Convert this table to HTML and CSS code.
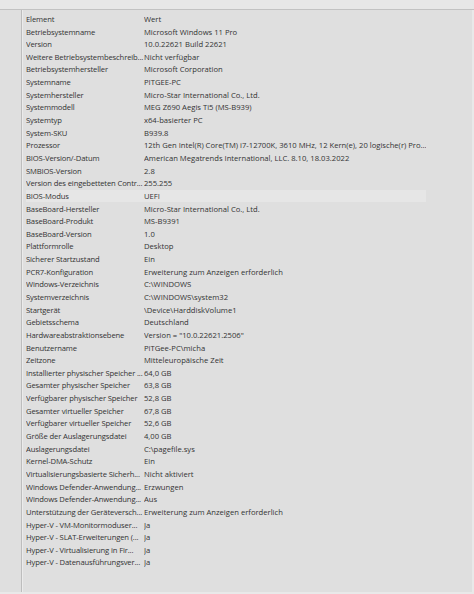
FILE: index.html
```html
<!DOCTYPE html>
<html lang="de">
<head>
<meta charset="utf-8">
<title>Systemübersicht</title>
<link rel="stylesheet" href="styles.css">
</head>
<body>
<div class="window">
  <div class="topbar"></div>
  <div class="main">
    <div class="tree"></div>
    <div class="listwrap">
      <div class="list">
        <div class="row head"><span class="c1">Element</span><span class="c2">Wert</span></div>
        <div class="row"><span class="c1">Betriebsystemname</span><span class="c2">Microsoft Windows 11 Pro</span></div>
        <div class="row"><span class="c1">Version</span><span class="c2">10.0.22621 Build 22621</span></div>
        <div class="row"><span class="c1">Weitere Betriebsystembeschreib...</span><span class="c2">Nicht verfügbar</span></div>
        <div class="row"><span class="c1">Betriebsystemhersteller</span><span class="c2">Microsoft Corporation</span></div>
        <div class="row"><span class="c1">Systemname</span><span class="c2">PITGEE-PC</span></div>
        <div class="row"><span class="c1">Systemhersteller</span><span class="c2">Micro-Star International Co., Ltd.</span></div>
        <div class="row"><span class="c1">Systemmodell</span><span class="c2">MEG Z690 Aegis Ti5 (MS-B939)</span></div>
        <div class="row"><span class="c1">Systemtyp</span><span class="c2">x64-basierter PC</span></div>
        <div class="row"><span class="c1">System-SKU</span><span class="c2">B939.8</span></div>
        <div class="row"><span class="c1">Prozessor</span><span class="c2">12th Gen Intel(R) Core(TM) i7-12700K, 3610 MHz, 12 Kern(e), 20 logische(r) Pro...</span></div>
        <div class="row"><span class="c1">BIOS-Version/-Datum</span><span class="c2">American Megatrends International, LLC. 8.10, 18.03.2022</span></div>
        <div class="row"><span class="c1">SMBIOS-Version</span><span class="c2">2.8</span></div>
        <div class="row"><span class="c1">Version des eingebetteten Contr...</span><span class="c2">255.255</span></div>
        <div class="row selected"><span class="c1">BIOS-Modus</span><span class="c2">UEFI</span></div>
        <div class="row"><span class="c1">BaseBoard-Hersteller</span><span class="c2">Micro-Star International Co., Ltd.</span></div>
        <div class="row"><span class="c1">BaseBoard-Produkt</span><span class="c2">MS-B9391</span></div>
        <div class="row"><span class="c1">BaseBoard-Version</span><span class="c2">1.0</span></div>
        <div class="row"><span class="c1">Plattformrolle</span><span class="c2">Desktop</span></div>
        <div class="row"><span class="c1">Sicherer Startzustand</span><span class="c2">Ein</span></div>
        <div class="row"><span class="c1">PCR7-Konfiguration</span><span class="c2">Erweiterung zum Anzeigen erforderlich</span></div>
        <div class="row"><span class="c1">Windows-Verzeichnis</span><span class="c2">C:\WINDOWS</span></div>
        <div class="row"><span class="c1">Systemverzeichnis</span><span class="c2">C:\WINDOWS\system32</span></div>
        <div class="row"><span class="c1">Startgerät</span><span class="c2">\Device\HarddiskVolume1</span></div>
        <div class="row"><span class="c1">Gebietsschema</span><span class="c2">Deutschland</span></div>
        <div class="row"><span class="c1">Hardwareabstraktionsebene</span><span class="c2">Version = "10.0.22621.2506"</span></div>
        <div class="row"><span class="c1">Benutzername</span><span class="c2">PiTGee-PC\micha</span></div>
        <div class="row"><span class="c1">Zeitzone</span><span class="c2">Mitteleuropäische Zeit</span></div>
        <div class="row"><span class="c1">Installierter physischer Speicher ...</span><span class="c2">64,0 GB</span></div>
        <div class="row"><span class="c1">Gesamter physischer Speicher</span><span class="c2">63,8 GB</span></div>
        <div class="row"><span class="c1">Verfügbarer physischer Speicher</span><span class="c2">52,8 GB</span></div>
        <div class="row"><span class="c1">Gesamter virtueller Speicher</span><span class="c2">67,8 GB</span></div>
        <div class="row"><span class="c1">Verfügbarer virtueller Speicher</span><span class="c2">52,6 GB</span></div>
        <div class="row"><span class="c1">Größe der Auslagerungsdatei</span><span class="c2">4,00 GB</span></div>
        <div class="row"><span class="c1">Auslagerungsdatei</span><span class="c2">C:\pagefile.sys</span></div>
        <div class="row"><span class="c1">Kernel-DMA-Schutz</span><span class="c2">Ein</span></div>
        <div class="row"><span class="c1">Virtualisierungsbasierte Sicherh...</span><span class="c2">Nicht aktiviert</span></div>
        <div class="row"><span class="c1">Windows Defender-Anwendung...</span><span class="c2">Erzwungen</span></div>
        <div class="row"><span class="c1">Windows Defender-Anwendung...</span><span class="c2">Aus</span></div>
        <div class="row"><span class="c1">Unterstützung der Geräteversch...</span><span class="c2">Erweiterung zum Anzeigen erforderlich</span></div>
        <div class="row"><span class="c1">Hyper-V - VM-Monitormoduser...</span><span class="c2">Ja</span></div>
        <div class="row"><span class="c1">Hyper-V - SLAT-Erweiterungen (...</span><span class="c2">Ja</span></div>
        <div class="row"><span class="c1">Hyper-V - Virtualisierung in Fir...</span><span class="c2">Ja</span></div>
        <div class="row"><span class="c1">Hyper-V - Datenausführungsver...</span><span class="c2">Ja</span></div>
      </div>
    </div>
    <div class="edge"></div>
  </div>
  <div class="bottom"></div>
</div>
</body>
</html>
```
FILE: styles.css
```css
html, body {
  margin: 0;
  padding: 0;
  background: #dfdfdf;
}
.window {
  width: 474px;
  height: 594px;
  display: flex;
  flex-direction: column;
  background: #dfdfdf;
  font-family: "Open Sans", "Noto Sans", sans-serif;
  font-size: 7.65px;
  color: #333;
  overflow: hidden;
}
.topbar {
  height: 9px;
  flex: none;
  background: #e7e7e7;
  border-bottom: 1px solid #c2c2c2;
}
.main {
  flex: 1;
  display: flex;
  min-height: 0;
}
.tree {
  width: 21px;
  flex: none;
  background: #dfdfdf;
  border-right: 1px solid #bdbdbd;
}
.listwrap {
  flex: 1;
  border-left: 1px solid #ebebeb;
  padding: 2.6px 0 0 3px;
  min-width: 0;
}
.list {
  display: flex;
  flex-direction: column;
  width: 400px;
}
.row {
  height: 12.65px;
  display: flex;
  align-items: center;
  white-space: nowrap;
}
.row.selected {
  background: #e6e6e6;
}
.c1 {
  width: 116px;
  padding-right: 2px;
  flex: none;
  overflow: hidden;
  text-overflow: clip;
  letter-spacing: -0.14px;
}
.c2 {
  flex: 1;
  overflow: hidden;
}
.edge {
  width: 2px;
  flex: none;
  background: #e9e9e9;
}
.bottom {
  height: 2px;
  flex: none;
  background: #e9e9e9;
}
```
